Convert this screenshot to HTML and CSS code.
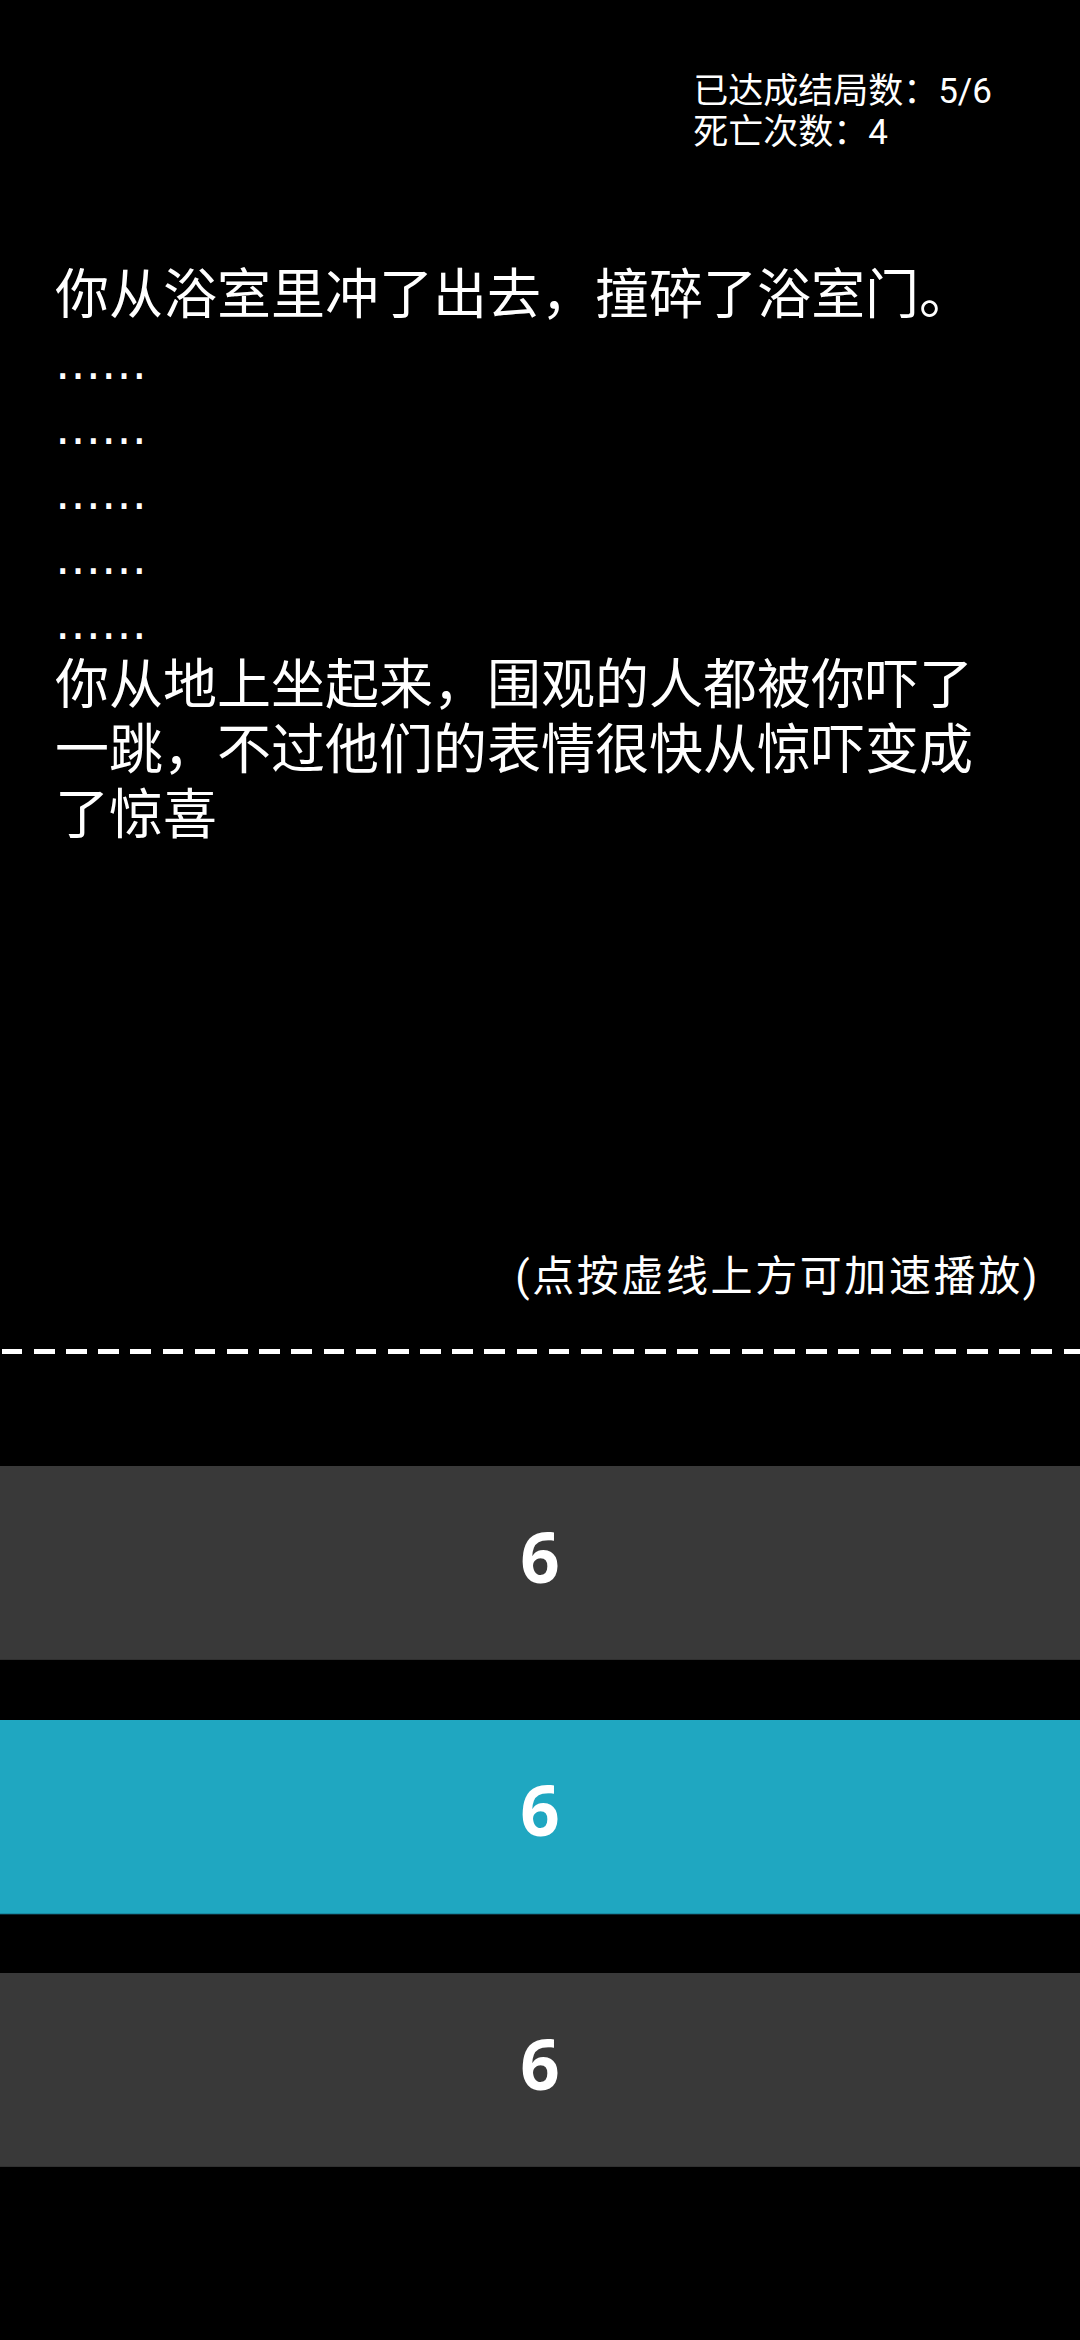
FILE: index.html
```html
<!DOCTYPE html>
<html lang="zh-CN">
<head>
<meta charset="utf-8">
<title>Story</title>
<link rel="stylesheet" href="styles.css">
</head>
<body>
<div class="page">
  <header class="stats">
    <div class="stats-box">
      <div class="stat">已达成结局数：5/6</div>
      <div class="stat">死亡次数：4</div>
    </div>
  </header>
  <main class="story">
    <p class="line">你从浴室里冲了出去，撞碎了浴室门。</p>
    <p class="line"><span class="dots">……</span></p>
    <p class="line"><span class="dots">……</span></p>
    <p class="line"><span class="dots">……</span></p>
    <p class="line"><span class="dots">……</span></p>
    <p class="line"><span class="dots">……</span></p>
    <p class="line">你从地上坐起来，围观的人都被你吓了一跳，不过他们的表情很快从惊吓变成了惊喜</p>
  </main>
  <section class="controls">
    <div class="hint">(点按虚线上方可加速播放)</div>
    <div class="dash"></div>
    <div class="choices">
      <button class="choice">6</button>
      <button class="choice choice-active">6</button>
      <button class="choice">6</button>
    </div>
  </section>
</div>
</body>
</html>
```

FILE: styles.css
```css
html, body {
  margin: 0;
  padding: 0;
  background: #000;
}
body {
  width: 1080px;
  height: 2340px;
  overflow: hidden;
  color: #fff;
  font-family: Roboto, "Noto Sans CJK SC", sans-serif;
}
.page {
  display: flex;
  flex-direction: column;
  height: 2340px;
}
.stats {
  display: flex;
  justify-content: flex-end;
  padding: 71px 88px 0 0;
}
.stat {
  font-size: 35px;
  line-height: 41px;
}
.story {
  margin-top: 110px;
  padding: 0 70px 0 55px;
  font-size: 54px;
  line-height: 65px;
}
.line {
  margin: 0;
  height: 65px;
}
.line:last-child {
  height: auto;
}
.dots {
  font-family: "DejaVu Sans", Roboto, sans-serif;
  font-size: 46px;
  line-height: 1;
}
.controls {
  margin-top: auto;
  padding-bottom: 173px;
  display: flex;
  flex-direction: column;
}
.hint {
  text-align: right;
  padding-right: 40px;
  font-size: 42px;
  letter-spacing: 2.6px;
  line-height: 56px;
}
.dash {
  margin-top: 44px;
  height: 5px;
  background: repeating-linear-gradient(to right,
    transparent 0, transparent 1.7px,
    #fff 1.7px, #fff 22.4px,
    transparent 22.4px, transparent 32.18px);
}
.choices {
  margin-top: 112px;
  display: flex;
  flex-direction: column;
  gap: 59.5px;
}
.choice {
  display: flex;
  align-items: center;
  justify-content: center;
  height: 194px;
  margin: 0;
  padding: 0 0 14px;
  border: 0;
  border-bottom: 1px solid #303030;
  background: #393939;
  color: #fff;
  font-family: "Open Sans", "Noto Sans", sans-serif;
  font-weight: 700;
  font-size: 69px;
}
.choice-active {
  background: #1fa7c1;
  border-bottom: 1px solid #178ca4;
  box-shadow: 0 1px 0 #0b2a35;
}
```
